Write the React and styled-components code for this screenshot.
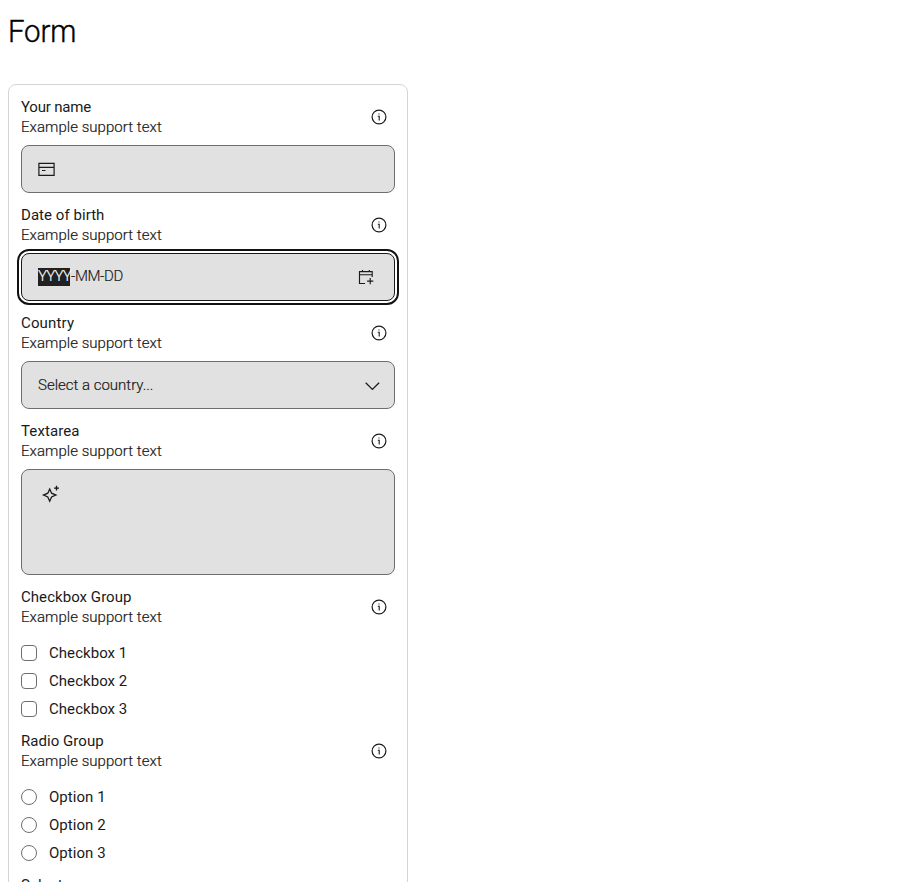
import React from "react";
import styled, { createGlobalStyle } from "styled-components";

const GlobalStyle = createGlobalStyle`
  *, *::before, *::after { box-sizing: border-box; }
  body {
    margin: 0;
    background: #fff;
    color: #1a1a1a;
    font-family: Roboto, "Liberation Sans", sans-serif;
    font-size: 15px;
    line-height: 20px;
  }
`;

const Page = styled.main`
  height: 100vh;
  overflow: hidden;
  padding: 9px 8px 0;
`;

const Title = styled.h1`
  width: max-content;
  margin: 0 0 31px;
  color: #000;
  font-size: 32px;
  font-weight: 300;
  line-height: 44px;
  letter-spacing: -0.2px;
  transform: scaleX(0.92);
  transform-origin: left;
  -webkit-text-stroke: 0.4px #000;
`;

const Card = styled.form`
  display: flex;
  flex-direction: column;
  gap: 12px;
  width: 400px;
  padding: 12px;
  border: 1px solid #d5d5d5;
  border-radius: 8px;
`;

const FieldGroup = styled.section`
  display: flex;
  flex-direction: column;
  gap: ${(p) => (p.$gap ? p.$gap : 8)}px;
`;

const FieldHeader = styled.header`
  display: flex;
  align-items: center;
  justify-content: space-between;
  height: 40px;
  padding-right: 8px;
`;

const Label = styled.div`
  width: max-content;
  letter-spacing: ${(p) => p.$spacing || 0}px;
`;

const Support = styled.div`
  width: max-content;
  font-weight: 300;
  letter-spacing: 0.05px;
  -webkit-text-stroke: 0.2px #1a1a1a;
`;

const InfoButton = styled.button`
  display: flex;
  padding: 0;
  border: 0;
  background: none;
  color: #1a1a1a;
`;

const Control = styled.div`
  display: flex;
  align-items: ${(p) => (p.$tall ? "flex-start" : "center")};
  justify-content: space-between;
  height: ${(p) => (p.$tall ? 106 : 48)}px;
  padding: ${(p) => (p.$tall ? "14px 19px" : `0 ${p.$end || 16}px 0 16px`)};
  border: 1px solid ${(p) => (p.$focused ? "#1a1a1a" : "#6e6e6e")};
  border-radius: 8px;
  background: #e1e1e1;
  outline: ${(p) => (p.$focused ? "2px solid #111" : "none")};
  outline-offset: 2px;
`;

const DateValue = styled.span`
  display: flex;
  gap: 1px;
  font-weight: 300;
  -webkit-text-stroke: 0.15px currentColor;
`;

const Segment = styled.span`
  width: ${(p) => (p.$width ? `${p.$width}px` : "auto")};
  height: 18px;
  line-height: 17px;
  white-space: nowrap;
  letter-spacing: ${(p) => p.$spacing || 0}px;
  background: ${(p) => (p.$selected ? "#212121" : "transparent")};
  color: ${(p) => (p.$selected ? "#fff" : "#1a1a1a")};
`;

const Placeholder = styled.span`
  font-weight: 300;
  letter-spacing: 0;
  -webkit-text-stroke: 0.2px #1a1a1a;
`;

const Choices = styled.div`
  display: flex;
  flex-direction: column;
  gap: 8px;
`;

const Choice = styled.label`
  display: flex;
  align-items: center;
  gap: 12px;
  height: 20px;
`;

const Mark = styled.span`
  width: 16px;
  height: 16px;
  border: 1px solid #6e6e6e;
  border-radius: ${(p) => (p.$round ? "50%" : "4px")};
  background: #fff;
`;

const Icon = styled.svg`
  display: block;
  flex: none;
  fill: none;
  stroke: #1a1a1a;
  stroke-width: ${(p) => p.$stroke || 1.2};
`;

const InfoIcon = () => (
  <Icon width="16" height="16" viewBox="0 0 16 16">
    <circle cx="8" cy="8" r="6.9" />
    <path d="M6.8 7.3H8.2V11.5M8 4.4V5.6" strokeWidth="1.1" />
  </Icon>
);

const CardIcon = () => (
  <Icon width="17" height="14" viewBox="0 0 17 14">
    <path d="M.9 1.4H16.1V13.3H.9ZM.9 5.4H16.1M4 8.5H7.5" />
  </Icon>
);

const CalendarIcon = () => (
  <Icon width="16" height="16" viewBox="0 0 16 16" $stroke={1.15}>
    <path d="M7 14.5H1.5V2.6H14.2V8M1.5 5.7H14.2M4.5 1V2.6M11.3 1V2.6M12.2 9V15.2M9.1 12.1H15.3" />
  </Icon>
);

const ChevronIcon = () => (
  <Icon width="16" height="16" viewBox="0 0 16 16" $stroke={1.3}>
    <path d="M1.7 5.7 8.4 12.4 15.1 5.7" />
  </Icon>
);

const SparkleIcon = () => (
  <Icon width="20" height="20" viewBox="0 0 20 20" $stroke={1.3}>
    <path d="M8.7 5 10.6 9.2 14.9 11.1 10.6 13 8.7 17.2 6.8 13 2.5 11.1 6.8 9.2Z" />
    <path d="M15.5 1.8V6.6M13.1 4.2H17.9" />
    <path d="M15.5 3 16.7 4.2 15.5 5.4 14.3 4.2Z" fill="#1a1a1a" stroke="none" />
  </Icon>
);

function Field({ label, spacing = 0.05, gap, children }) {
  return (
    <FieldGroup $gap={gap}>
      <FieldHeader>
        <div>
          <Label $spacing={spacing}>{label}</Label>
          <Support>Example support text</Support>
        </div>
        <InfoButton type="button" aria-label={`About ${label}`}>
          <InfoIcon />
        </InfoButton>
      </FieldHeader>
      {children}
    </FieldGroup>
  );
}

function ChoiceList({ name, round }) {
  return (
    <Choices>
      {[1, 2, 3].map((n) => (
        <Choice key={n}>
          <Mark $round={round} />
          <Label $spacing={0.05}>{`${name} ${n}`}</Label>
        </Choice>
      ))}
    </Choices>
  );
}

export default function App() {
  return (
    <>
      <GlobalStyle />
      <Page>
        <Title>Form</Title>
        <Card>
          <Field label="Your name" spacing={-0.2}>
            <Control><CardIcon /></Control>
          </Field>
          <Field label="Date of birth">
            <Control $focused $end={20}>
              <DateValue>
                <Segment $selected $width={32} $spacing={-0.9}>YYYY</Segment>
                <Segment $spacing={-0.4}>-MM-DD</Segment>
              </DateValue>
              <CalendarIcon />
            </Control>
          </Field>
          <Field label="Country" spacing={0.15}>
            <Control $end={14}>
              <Placeholder>Select a country...</Placeholder>
              <ChevronIcon />
            </Control>
          </Field>
          <Field label="Textarea" spacing={0.1}>
            <Control $tall><SparkleIcon /></Control>
          </Field>
          <Field label="Checkbox Group" gap={16}>
            <ChoiceList name="Checkbox" />
          </Field>
          <Field label="Radio Group" gap={16}>
            <ChoiceList name="Option" round />
          </Field>
          <Field label="Select" spacing={0.1} />
        </Card>
      </Page>
    </>
  );
}
